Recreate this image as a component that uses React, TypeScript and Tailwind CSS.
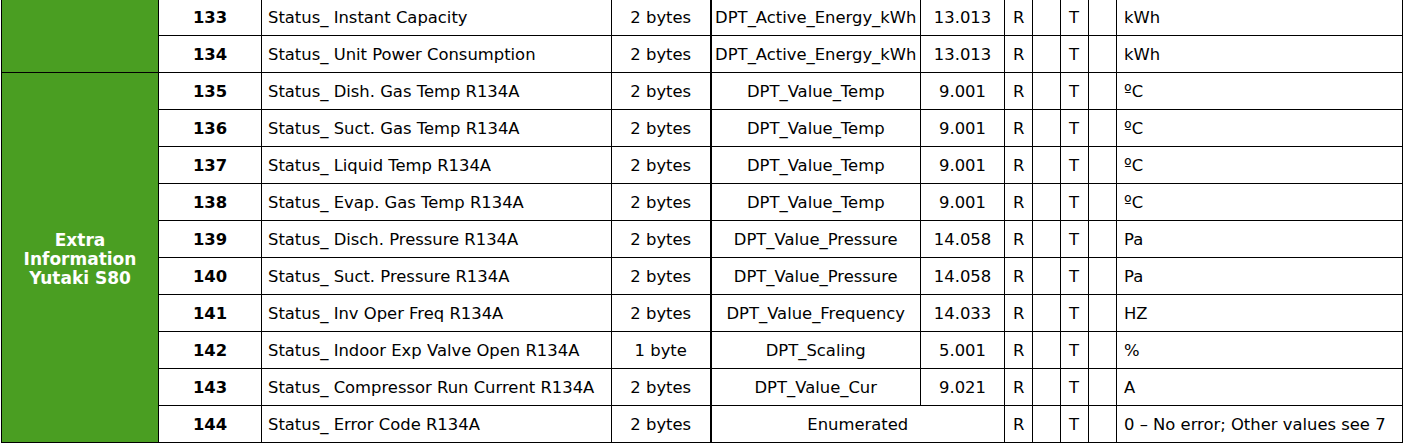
import React from "react";

// KNX object table fragment — rows 133..144, status objects for the Yutaki S80.

type Row = {
  id: number;
  name: string;
  size: string;
  dpt: string;
  code?: string;
  unit: string;
};

const rows: Row[] = [
  { id: 133, name: "Status_ Instant Capacity", size: "2 bytes", dpt: "DPT_Active_Energy_kWh", code: "13.013", unit: "kWh" },
  { id: 134, name: "Status_ Unit Power Consumption", size: "2 bytes", dpt: "DPT_Active_Energy_kWh", code: "13.013", unit: "kWh" },
  { id: 135, name: "Status_ Dish. Gas Temp R134A", size: "2 bytes", dpt: "DPT_Value_Temp", code: "9.001", unit: "ºC" },
  { id: 136, name: "Status_ Suct. Gas Temp R134A", size: "2 bytes", dpt: "DPT_Value_Temp", code: "9.001", unit: "ºC" },
  { id: 137, name: "Status_ Liquid Temp R134A", size: "2 bytes", dpt: "DPT_Value_Temp", code: "9.001", unit: "ºC" },
  { id: 138, name: "Status_ Evap. Gas Temp R134A", size: "2 bytes", dpt: "DPT_Value_Temp", code: "9.001", unit: "ºC" },
  { id: 139, name: "Status_ Disch. Pressure R134A", size: "2 bytes", dpt: "DPT_Value_Pressure", code: "14.058", unit: "Pa" },
  { id: 140, name: "Status_ Suct. Pressure R134A", size: "2 bytes", dpt: "DPT_Value_Pressure", code: "14.058", unit: "Pa" },
  { id: 141, name: "Status_ Inv Oper Freq R134A", size: "2 bytes", dpt: "DPT_Value_Frequency", code: "14.033", unit: "HZ" },
  { id: 142, name: "Status_ Indoor Exp Valve Open R134A", size: "1 byte", dpt: "DPT_Scaling", code: "5.001", unit: "%" },
  { id: 143, name: "Status_ Compressor Run Current R134A", size: "2 bytes", dpt: "DPT_Value_Cur", code: "9.021", unit: "A" },
  { id: 144, name: "Status_ Error Code R134A", size: "2 bytes", dpt: "Enumerated", unit: "0 – No error; Other values see 7" },
];

const cell = "border border-black p-0 pt-[3px] whitespace-nowrap overflow-hidden";

export default function App() {
  return (
    <div className="w-[1403px] h-[445px] overflow-hidden bg-white font-['DejaVu_Sans',Verdana,sans-serif] text-[16.4px] text-black">
      <table className="table-fixed border-collapse ml-px -mt-[2px] w-[1401px]">
        <colgroup>
          <col className="w-[157px]" />
          <col className="w-[103px]" />
          <col className="w-[350px]" />
          <col className="w-[99px]" />
          <col className="w-[210px]" />
          <col className="w-[84px]" />
          <col className="w-[28px]" />
          <col className="w-[28px]" />
          <col className="w-[28px]" />
          <col className="w-[28px]" />
          <col className="w-[286px]" />
        </colgroup>
        <tbody>
          {rows.map((r, i) => (
            <tr key={r.id} className="h-[37px]">
              {i === 0 && <td rowSpan={2} className={`${cell} bg-[#4a9e22]`} />}
              {i === 2 && (
                <td
                  rowSpan={10}
                  className={`${cell} bg-[#4a9e22] text-white font-bold text-center text-[17px] leading-[19px]`}
                >
                  Extra
                  <br />
                  Information
                  <br />
                  Yutaki S80
                </td>
              )}
              <td className={`${cell} font-bold text-center`}>{r.id}</td>
              <td className={`${cell} pl-[6px]`}>{r.name}</td>
              <td className={`${cell} text-center border-r-2`}>{r.size}</td>
              {r.code ? (
                <>
                  <td className={`${cell} text-center`}>{r.dpt}</td>
                  <td className={`${cell} text-center`}>{r.code}</td>
                </>
              ) : (
                <td colSpan={2} className={`${cell} text-center`}>{r.dpt}</td>
              )}
              <td className={`${cell} pl-[8px]`}>R</td>
              <td className={cell} />
              <td className={`${cell} pl-[8px]`}>T</td>
              <td className={cell} />
              <td className={`${cell} pl-[7px]`}>{r.unit}</td>
            </tr>
          ))}
        </tbody>
      </table>
    </div>
  );
}
